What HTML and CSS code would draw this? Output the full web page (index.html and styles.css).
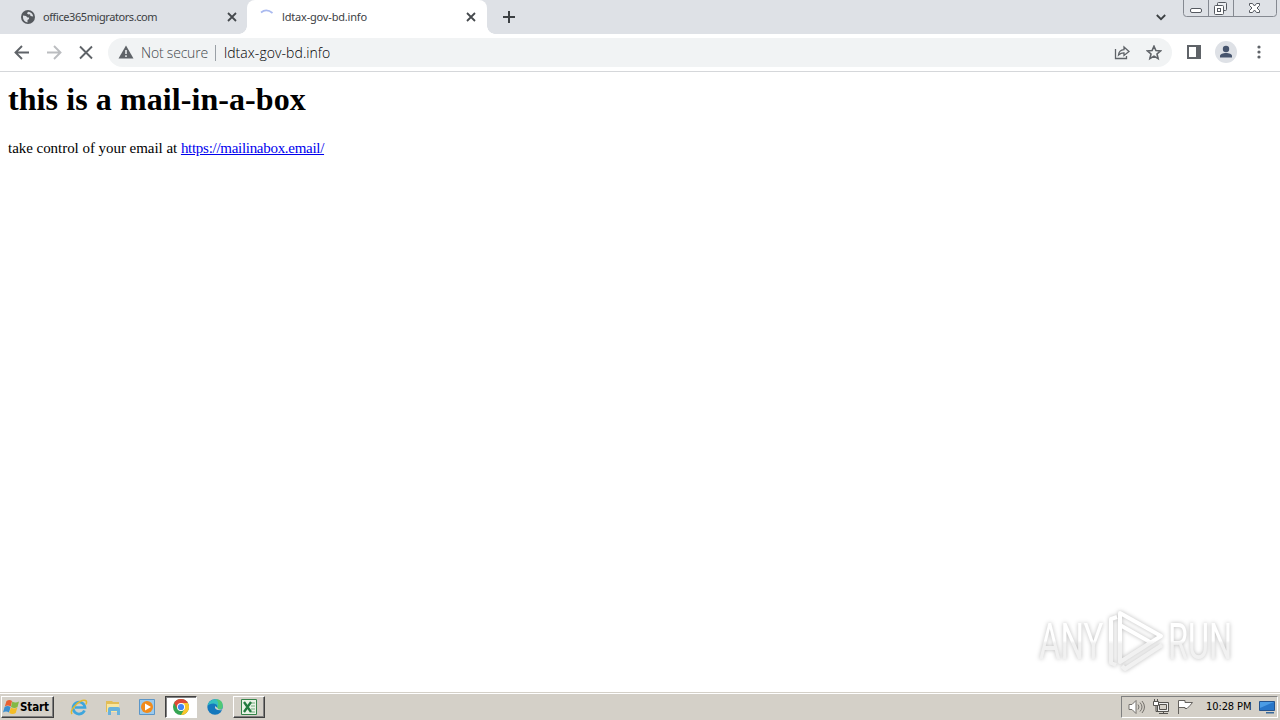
FILE: index.html
```
<!DOCTYPE html>
<html lang="en">

<head>
  <meta charset="utf-8">
  <title>ldtax-gov-bd.info</title>
  <link rel="stylesheet" href="styles.css">
</head>

<body>
  <header class="tab-strip">
    <div class="tab">
      <svg class="tab-icon" width="14" height="14" viewBox="0 0 14 14">
        <circle cx="7" cy="7" r="7" fill="#55595e"/>
        <path d="M2 5.500l3 .5 1.500 1.500H8V9L6.500 10v2.500C3.500 12 1.800 9.500 2 7zM7 1.800L6 3.500l1.500 1L9 4.200l.5 1.800 2.700.5C12 4 10 2 7 1.800z" fill="#dee1e6"/>
      </svg>
      <span class="tab-title first-title">office365migrators.com</span>
      <svg class="tab-close" width="10" height="10" viewBox="0 0 10 10"><path d="M1 1l8 8M9 1L1 9"/></svg>
    </div>
    <div class="tab active">
      <svg class="tab-icon" width="16" height="16" viewBox="0 0 16 16">
        <path d="M2 3.500Q7.500-.8 13.500 4" fill="none" stroke="#a9b9ef" stroke-width="1.700"/>
      </svg>
      <span class="tab-title second-title">ldtax-gov-bd.info</span>
      <svg class="tab-close" width="10" height="10" viewBox="0 0 10 10"><path d="M1 1l8 8M9 1L1 9"/></svg>
    </div>
    <svg class="new-tab" width="12" height="12" viewBox="0 0 12 12"><path d="M6 0v12M0 6h12" stroke="#3c4043" stroke-width="2"/></svg>
    <svg class="tab-search" width="10" height="7" viewBox="0 0 10 7"><path d="M.8 1L5 5.200 9.200 1" fill="none" stroke="#3c4043" stroke-width="1.800"/></svg>
    <svg class="window-buttons" width="94" height="18" viewBox="0 0 94 18">
      <path d="M.5 0v13.500q0 3 3 3h87q3 0 3-3V0M25.500 0v16M50.500 0v16" fill="none" stroke="#858991"/>
      <rect x="7.500" y="8.500" width="11" height="4" rx="1.500" fill="#fff" stroke="#555960"/>
      <rect x="34.500" y="2.500" width="9" height="8" rx="1" fill="#eceef1" stroke="#555960"/>
      <rect x="31.500" y="5.500" width="9" height="9" rx="1" fill="#fff" stroke="#555960"/>
      <rect x="34.500" y="8.500" width="3" height="3" fill="none" stroke="#555960"/>
      <path d="M66.500 3.500h3l2 2.500 2-2.500h3v2L74 8l2.500 2.500v2h-3l-2-2.500-2 2.500h-3v-2L69 8l-2.500-2.500z" fill="#fff" stroke="#555960"/>
    </svg>
  </header>

  <nav class="toolbar">
    <svg class="nav-buttons" width="80" height="16" viewBox="0 0 80 16" fill="none" stroke-width="1.900">
      <path d="M15 7.500H2M8 1L1.500 7.500 8 14" stroke="#5f6368"/>
      <path d="M33 7.500h13M40 1l6.500 6.500L40 14" stroke="#bbbdc0"/>
      <path d="M66 1.500l12 12M78 1.500l-12 12" stroke="#5f6368"/>
    </svg>
    <div class="address-bar">
      <svg class="warning" width="16" height="14" viewBox="0 0 16 14"><path d="M8 .5L15.500 13.500H.5z" fill="#5f6368"/><path d="M8 5v4M8 10.300v1.700" stroke="#f1f3f4" stroke-width="1.500"/></svg>
      <span class="not-secure">Not secure</span>
      <span class="divider"></span>
      <span class="url">ldtax-gov-bd.info</span>
      <svg class="share" width="16" height="16" viewBox="0 0 16 16" fill="none" stroke="#5f6368" stroke-width="1.300">
        <path d="M1.500 4v9.500h11V11M4.500 10Q5 5 10 4.700V2L15 6.500l-5 4V7.800Q7 7.700 4.500 10z"/>
      </svg>
      <svg class="star" width="16" height="16" viewBox="0 0 16 16"><path d="M8 1.200l1.900 4.300 4.700.4L11 9l1.100 4.600L8 11.100l-4.100 2.500L5 9 1.400 5.900 6.100 5.500z" fill="none" stroke="#5f6368" stroke-width="1.600"/></svg>
    </div>
    <svg class="side-panel" width="14" height="14" viewBox="0 0 14 14"><path d="M1 1h12v12H1z" fill="#fff" stroke="#5f6368" stroke-width="2"/><path d="M9 1h4v12H9z" fill="#5f6368"/></svg>
    <svg class="profile" width="22" height="22" viewBox="0 0 22 22"><circle cx="11" cy="11" r="11" fill="#dee1e6"/><circle cx="11" cy="8" r="3.200" fill="#46546d"/><path d="M5 16.500v-1.500c0-2 3-3 6-3s6 1 6 3v1.500z" fill="#46546d"/></svg>
    <svg class="more" width="4" height="14" viewBox="0 0 4 14" fill="#5f6368"><circle cx="2" cy="2" r="1.600"/><circle cx="2" cy="7" r="1.600"/><circle cx="2" cy="12" r="1.600"/></svg>
  </nav>

  <main class="page">
    <h1>this is a mail-in-a-box</h1>
    <p><span class="intro">take control of your email at </span><a href="https://mailinabox.email/">https://mailinabox.email/</a></p>
    <svg class="watermark" width="220" height="80" viewBox="0 0 220 80">
      <defs>
        <linearGradient id="fade" x1="0" y1="0" x2="0" y2="1"><stop offset=".48" stop-color="#fff"/><stop offset=".52" stop-color="#f1f1f1"/></linearGradient>
        <linearGradient id="mark-fade" gradientUnits="userSpaceOnUse" x1="0" y1="7" x2="0" y2="66"><stop offset=".48" stop-color="#fff"/><stop offset=".54" stop-color="#f1f1f1"/></linearGradient>
      </defs>
      <g class="watermark-text">
        <text transform="translate(8 54) scale(.66 1)">ANY</text>
        <text transform="translate(137 54) scale(.65 1)">RUN</text>
      </g>
      <g class="watermark-mark" fill="none" stroke-linejoin="round">
        <path d="M86 12L80 14V58L85 60"/>
        <path d="M131 40L94 64 91 61"/>
        <path d="M89 57V8L130 31 89 57V20L119 37"/>
      </g>
    </svg>
  </main>

  <footer class="taskbar">
    <div class="start">
      <svg width="17" height="16" viewBox="0 0 17 16">
        <path d="M3.500 2q3-2 5.500 0L7.800 7.500q-3-2-6 0z" fill="#e86032"/>
        <path d="M9.300 2.500q3 2 6.700 0L14.500 8q-3 2-6.500 0z" fill="#83b944"/>
        <path d="M1.600 8q3-2 6 0L6 13.500q-3-2-6 0z" fill="#3b8fd0"/>
        <path d="M7.900 8.400q3 2 6.500 0L12.700 14q-3 2-6.500 0z" fill="#f4bd27"/>
      </svg>
      <span>Start</span>
    </div>
    <div class="launcher">
      <svg width="18" height="18" viewBox="0 0 18 18" fill="none">
        <path d="M14.500 12.500A6 6 0 1 1 15 9.500H5" stroke="#3ea6dd" stroke-width="2.700"/>
        <path d="M2 16C-1 12 10 1 15.500 2.500q2 1 .3 4" stroke="#e3b92e" stroke-width="1.500"/>
      </svg>
    </div>
    <div class="launcher">
      <svg width="16" height="16" viewBox="0 0 16 16"><path d="M1 2h6l1 1h6v10H1z" fill="#e2bd57"/><path d="M2 5h12v8H2z" fill="#f8e6a0"/><path d="M3 10q0-2 2-2h8q2 0 2 2v6h-3v-4H6v4H3z" fill="#68b2dc"/></svg>
    </div>
    <div class="launcher">
      <svg width="16" height="16" viewBox="0 0 16 16"><path d="M.5.5h15v15H.5z" fill="#9bcaed" stroke="#5b96c8"/><circle cx="8" cy="8" r="6" fill="#f18b1b"/><path d="M6 4.500L12 8l-6 3.500z" fill="#fff"/></svg>
    </div>
    <div class="launcher pressed">
      <svg width="16" height="16" viewBox="0 0 16 16"><circle cx="8" cy="8" r="8" fill="#35a552"/><path d="M1.070 4A8 8 0 0 1 14.930 4H8L4.530 10z" fill="#df4937"/><path d="M14.930 4A8 8 0 0 1 8 16l3.460-6L8 4z" fill="#fbc52b"/><circle cx="8" cy="8" r="4" fill="#fff"/><circle cx="8" cy="8" r="3.100" fill="#4285f4"/></svg>
    </div>
    <div class="launcher">
      <svg width="16" height="16" viewBox="0 0 16 16"><circle cx="8" cy="8" r="7.700" fill="#1478bd"/><path d="M.5 7Q2 .3 8.500.3q7 0 7.200 6.700 0 3.800-4.500 3.500-2-.4-1-1.700Q11 5 6.500 4.500 2 4.500.5 7z" fill="#35bfc0"/><path d="M9 .3q7 .5 6.700 6.700 0 3.800-4.500 3.500-2-.4-1-1.700Q13 4 9 .3z" fill="#51c875"/><path d="M8 7q-1 5 8 4.200v-1q-5 1-5.500-1.200z" fill="#d4d0c8"/></svg>
    </div>
    <div class="launcher raised">
      <svg width="16" height="16" viewBox="0 0 16 16"><path d="M.5.5h15v15H.5z" fill="#e9f3e6" stroke="#338348"/><path d="M10 4h4M10 7h4M10 10h4M10 13h4" stroke="#73ab7d"/><path d="M3 3l7 10M10 3L3 13" stroke="#217a3e" stroke-width="2.300"/></svg>
    </div>
    <div class="tray">
      <svg width="17" height="16" viewBox="0 0 17 16" fill="none" stroke="#74716c"><path d="M1 5.500h3l4-4v13l-4-4H1z" fill="#fff"/><path d="M10 5.500q2 2.500 0 5M12 3.500q4 4.500 0 9M14 2q5 6 0 12"/></svg>
      <svg width="16" height="16" viewBox="0 0 16 16" fill="none" stroke="#55534f"><path d="M4.500 3.500h11v9h-11z" fill="#eee"/><path d="M6.500 5.500h7v5h-7z" fill="#d4d0c8"/><path d="M6 14.500h9M10.500 12v2"/><path d="M.5 2.500h5v4h-5z" fill="#fff"/><path d="M1.500 0v2M4.500 0v2M3 7v5.500h2"/></svg>
      <svg width="16" height="16" viewBox="0 0 16 16"><path d="M1.500 15V1.500H8v2h7.500l-2.500 3-3 3H8v-1H2" fill="#fff" stroke="#65625e"/></svg>
      <span class="clock">10:28 PM</span>
      <svg width="16" height="14" viewBox="0 0 16 14"><path d="M.5 1.500h15v9H.5z" fill="#2876c9" stroke="#24538e"/><path d="M1 2h14L1 8z" fill="#4b9ce5"/><path d="M7 12h8v1.500H7z" fill="#37689b"/></svg>
    </div>
  </footer>
</body>

</html>
```

FILE: styles.css
```
* {
  box-sizing: border-box;
}

body {
  width: 1280px;
  height: 720px;
  margin: 0;
  display: flex;
  flex-direction: column;
  overflow: hidden;
  background: #fff;
  font-family: "Noto Sans", sans-serif;
}

svg {
  display: block;
  flex: none;
}

.tab-strip {
  display: flex;
  height: 34px;
  background: #dee1e6;
}

.tab {
  display: flex;
  align-items: center;
  width: 247px;
  padding: 0 10px 0 21px;
}

.tab.active {
  position: relative;
  width: 240px;
  padding: 0 11px 0 12px;
  background: #fff;
  border-radius: 8px 8px 0 0;
}

.tab.active::before,
.tab.active::after {
  content: "";
  position: absolute;
  bottom: 0;
  width: 8px;
  height: 8px;
}

.tab.active::before {
  left: -8px;
  background: radial-gradient(circle at 0 0, #dee1e6 7.5px, #fff 8px);
}

.tab.active::after {
  right: -8px;
  background: radial-gradient(circle at 100% 0, #dee1e6 7.5px, #fff 8px);
}

.tab-title {
  margin-left: 8px;
  padding-bottom: 2px;
  color: #3c4043;
  font-size: 11px;
  white-space: nowrap;
}

.first-title {
  letter-spacing: -0.42px;
}

.second-title {
  margin-left: 7px;
  letter-spacing: -0.18px;
}

.tab-close {
  margin-left: auto;
  stroke: #45494d;
  stroke-width: 1.8;
}

.new-tab {
  margin: 11px 0 0 16px;
}

.tab-search {
  margin: 14px 17px 0 auto;
}

.window-buttons {
  margin-right: 3px;
}

.toolbar {
  display: flex;
  align-items: center;
  height: 38px;
  border-bottom: 1px solid #d5d7da;
}

.nav-buttons {
  margin: 0 14px;
}

.address-bar {
  display: flex;
  align-items: center;
  width: 1064px;
  height: 29px;
  padding: 0 10px;
  border-radius: 15px;
  background: #f1f3f4;
  font-family: "Open Sans", sans-serif;
  font-size: 14px;
  font-weight: 300;
}

.warning {
  margin-bottom: 2px;
}

.not-secure {
  width: 67px;
  margin-left: 7px;
  color: #44484c;
  letter-spacing: -0.2px;
  white-space: nowrap;
}

.divider {
  width: 1px;
  height: 16px;
  margin: 0 8px 0 7px;
  background: #9aa0a6;
}

.url {
  color: #000;
  letter-spacing: 0.06px;
}

.share {
  margin-left: auto;
}

.star {
  margin-left: 16px;
}

.side-panel {
  margin: 0 0 1px 15px;
}

.profile {
  margin: 0 0 1px 14px;
}

.more {
  margin: 0 0 1px 20px;
}

.page {
  position: relative;
  flex: 1;
  padding: 9px 8px 8px;
  font-family: "Liberation Serif", serif;
  font-size: 15px;
}

.page h1 {
  margin: 0;
  font-size: 32px;
  line-height: 37px;
  letter-spacing: 0.08px;
}

.page p {
  margin: 21px 0 0;
  line-height: 18px;
}

.intro {
  letter-spacing: -0.04px;
  white-space: pre;
}

.page a {
  color: #0000ee;
  letter-spacing: -0.29px;
}

.watermark {
  position: absolute;
  left: 1031px;
  top: 533px;
  filter: drop-shadow(0 0 2px #bbb);
}

.watermark-text {
  fill: url(#fade);
  font-family: Roboto, sans-serif;
  font-size: 50px;
}

.watermark-mark {
  stroke: url(#mark-fade);
  stroke-width: 4;
}

.taskbar {
  display: flex;
  align-items: center;
  height: 28px;
  padding: 1px 2px 1px 1px;
  border-top: 1px solid #d4d0c8;
  background: #d4d0c8;
  box-shadow: inset 0 1px #fff;
  font-family: "DejaVu Sans Condensed", "DejaVu Sans", sans-serif;
  font-size: 11px;
}

.start,
.raised {
  border: 1px solid;
  border-color: #fff #404040 #404040 #fff;
  box-shadow: inset -1px -1px #808080;
}

.start {
  display: flex;
  align-items: center;
  width: 53px;
  height: 22px;
  padding-left: 1px;
  margin-right: 9px;
  font-size: 11.5px;
  font-weight: bold;
  letter-spacing: -0.1px;
}

.launcher {
  display: flex;
  align-items: center;
  justify-content: center;
  width: 32px;
  height: 22px;
  margin-right: 2px;
}

.pressed {
  border: 1px solid;
  border-color: #404040 #fff #fff #404040;
  background: #fff;
  box-shadow: inset 1px 1px #808080;
}

.tray {
  display: flex;
  align-items: center;
  width: 157px;
  height: 22px;
  margin-left: auto;
  padding-left: 6px;
  gap: 8px;
  border: 1px solid;
  border-color: #808080 #fff #fff #808080;
}

.clock {
  margin-left: 5px;
  letter-spacing: -0.1px;
  white-space: nowrap;
}
```
